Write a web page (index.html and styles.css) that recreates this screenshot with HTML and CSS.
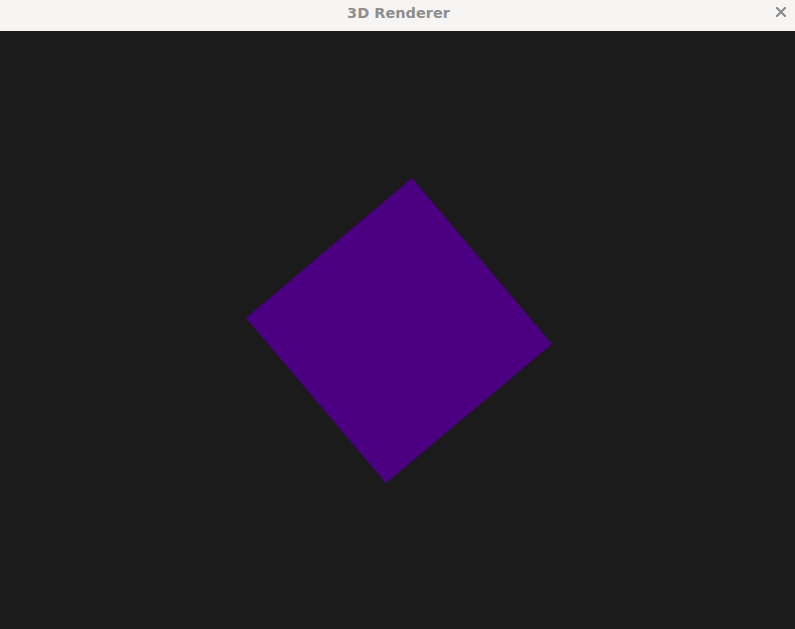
FILE: index.html
```html
<!DOCTYPE html>
<html>
<head>
<meta charset="utf-8">
<link rel="stylesheet" href="styles.css">
</head>
<body>
<div class="window">
  <header class="titlebar">
    <span class="title">3D Renderer</span>
    <button class="close" aria-label="Close">
      <svg width="10" height="10" viewBox="0 0 10 10"><path d="M1 1L9 9M9 1L1 9" stroke="#888" stroke-width="2" stroke-linecap="square"/></svg>
    </button>
  </header>
  <main class="viewport">
    <svg class="scene" width="795" height="598" viewBox="0 0 795 598">
      <polygon points="412,147 552,313 386,452 246,287" fill="#4b0082"/>
    </svg>
  </main>
</div>
</body>
</html>
```
FILE: styles.css
```css
html, body {
  margin: 0;
  padding: 0;
  width: 795px;
  height: 629px;
  overflow: hidden;
  background: #1b1b1b;
}
.window {
  display: flex;
  flex-direction: column;
  width: 795px;
  height: 629px;
}
.titlebar {
  position: relative;
  height: 31px;
  flex: 0 0 31px;
  background: #f6f5f4;
  display: flex;
  align-items: center;
  justify-content: center;
  font-family: "DejaVu Sans", sans-serif;
}
.title {
  font-size: 14.5px;
  font-weight: bold;
  color: #8e8e8e;
  margin-top: -6px;
  margin-left: 2px;
}
.close {
  position: absolute;
  right: 9px;
  top: 7px;
  width: 10px;
  height: 10px;
  padding: 0;
  border: 0;
  background: none;
  display: flex;
  margin-top: 0;
}
.viewport {
  flex: 1;
  background: #1b1b1b;
  display: flex;
}
.scene {
  display: block;
}
```
